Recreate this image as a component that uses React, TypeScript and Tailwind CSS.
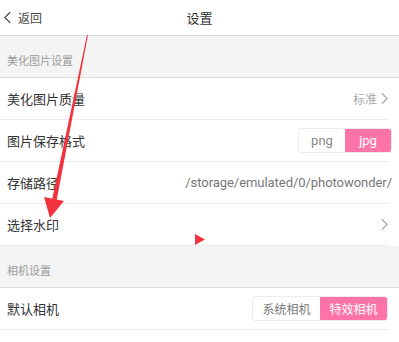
import React from 'react';

const font = { fontFamily: '"Noto Sans CJK SC", Roboto, sans-serif' };

const Chevron: React.FC<{ className?: string }> = ({ className }) => (
  <svg viewBox="0 0 8 14" className={className} fill="none" stroke="currentColor" strokeWidth="1.4">
    <path d="M1 1 L7 7 L1 13" />
  </svg>
);

const Section: React.FC<{ title: string }> = ({ title }) => (
  <div className="h-[42px] bg-[#f4f4f4] border-b border-[#dcdcdc] flex items-center pl-[7px] pt-[8px] text-[11px] text-[#9a9a9a]">
    {title}
  </div>
);

const Row: React.FC<{ label: string; pr?: string; children?: React.ReactNode }> = ({ label, pr = 'pr-[7px]', children }) => (
  <div className="border-b border-[#ececec] mr-[9px]">
    <div className={`h-[41px] flex items-center justify-between pl-[7px] mr-[-9px] ${pr}`}>
      <span className="text-[13px] text-[#333]">{label}</span>
      <div className="flex items-center">{children}</div>
    </div>
  </div>
);

const App: React.FC = () => {
  return (
    <div className="relative w-[399px] h-[342px] bg-white overflow-hidden" style={font}>
      {/* Header */}
      <header className="relative h-[36px] flex items-center border-b border-[#dcdcdc]">
        <div className="flex items-center pl-[4px] text-[#444]">
          <svg viewBox="0 0 8 14" className="w-[7px] h-[13px] mr-[7px]" fill="none" stroke="currentColor" strokeWidth="1.3">
            <path d="M7 1 L1 7 L7 13" />
          </svg>
          <span className="text-[12px]">返回</span>
        </div>
        <div className="absolute left-0 right-0 text-center text-[13px] text-[#333] pointer-events-none">设置</div>
      </header>

      <Section title="美化图片设置" />
      <Row label="美化图片质量" pr="pr-[11px]">
        <span className="text-[12px] text-[#aaa] mr-[4px]">标准</span>
        <Chevron className="w-[7px] h-[13px] text-[#aaa]" />
      </Row>
      <Row label="图片保存格式">
        <div className="flex h-[25px] w-[94px] rounded-[3px] border border-[#ececec] overflow-hidden text-[13px]">
          <div className="flex-1 flex items-center justify-center text-[#888]" style={{ fontFamily: 'Roboto, sans-serif' }}>png</div>
          <div className="flex-1 flex items-center justify-center bg-[#ff74a8] text-white" style={{ fontFamily: 'Roboto, sans-serif' }}>jpg</div>
        </div>
      </Row>
      <Row label="存储路径">
        <span className="text-[13px] text-[#777] tracking-[-0.05px]" style={{ fontFamily: 'Roboto, sans-serif' }}>/storage/emulated/0/photowonder/</span>
      </Row>
      <Row label="选择水印" pr="pr-[11px]">
        <Chevron className="w-[7px] h-[13px] text-[#aaa]" />
      </Row>

      <Section title="相机设置" />
      <Row label="默认相机" pr="pr-[11px]">
        <div className="flex h-[25px] w-[136px] rounded-[3px] border border-[#ececec] overflow-hidden text-[12px]">
          <div className="flex-1 flex items-center justify-center text-[#777]">系统相机</div>
          <div className="flex-1 flex items-center justify-center bg-[#ff74a8] text-white">特效相机</div>
        </div>
      </Row>

      {/* red annotation overlay */}
      <svg className="absolute left-0 top-0 pointer-events-none" width="399" height="342" viewBox="0 0 399 342">
        <polygon points="87,35 88,35 56.5,201 52,200" fill="#f2323c" />
        <polygon points="44,197 64,201 50,218" fill="#f2323c" />
        <polygon points="195,234 205,239.5 195,245" fill="#f2323c" />
      </svg>
    </div>
  );
};

export default App;
